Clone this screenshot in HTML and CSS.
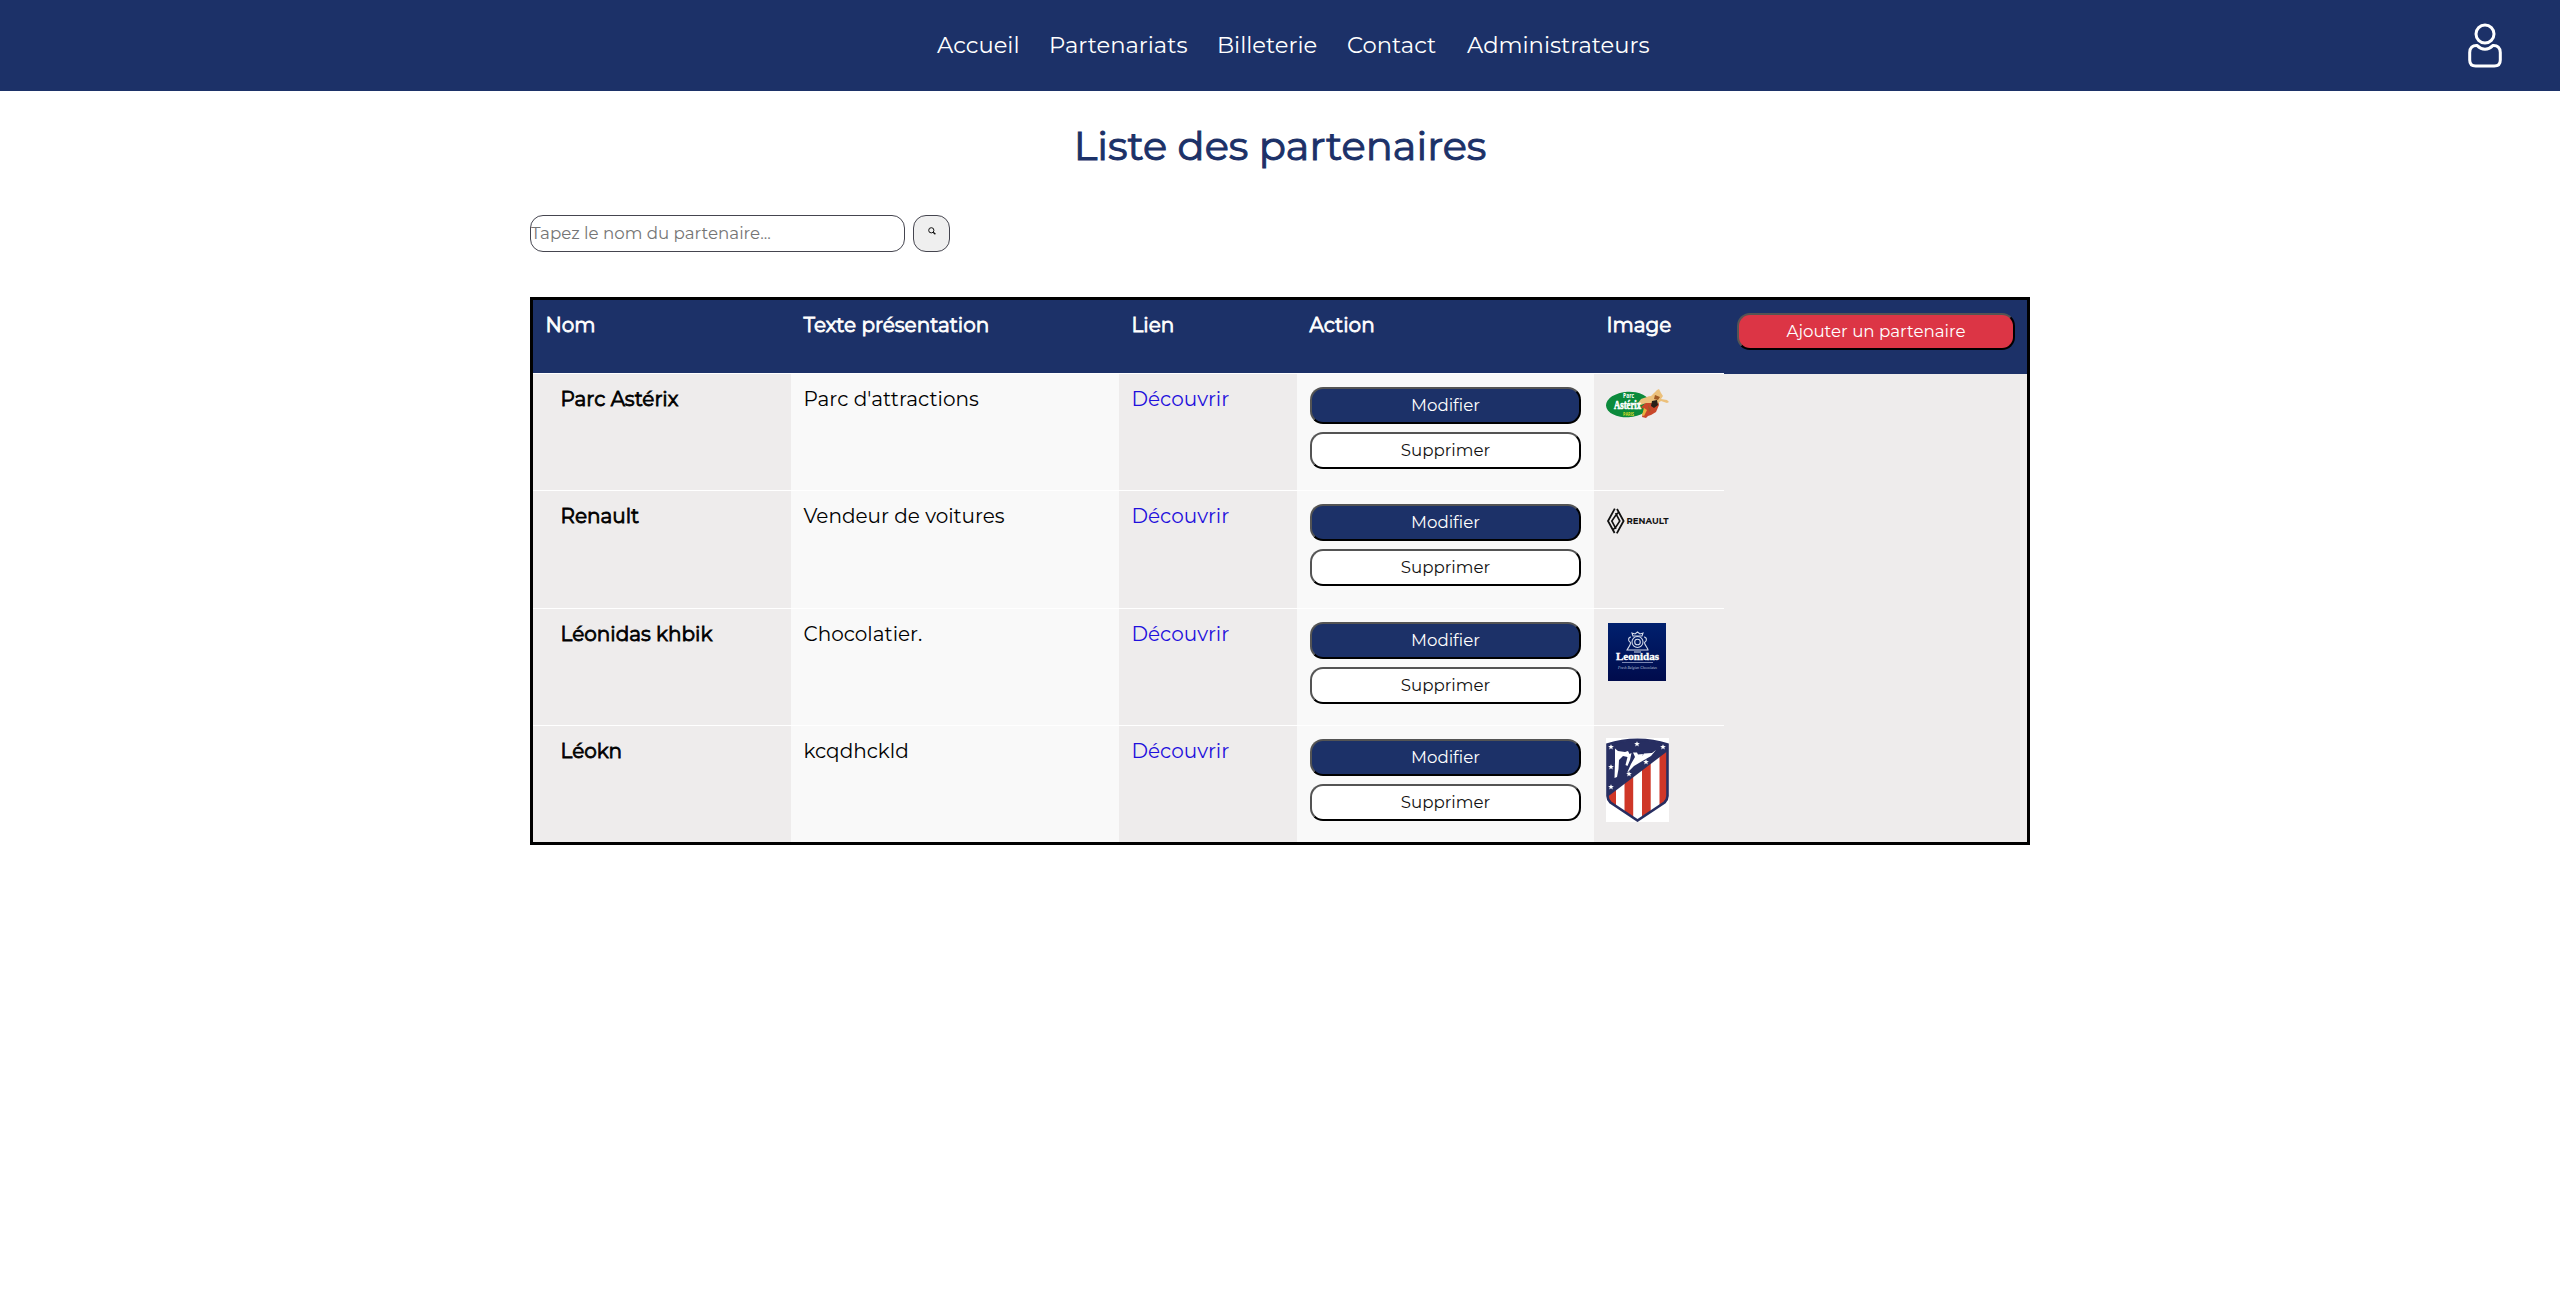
FILE: index.html
```html
<!DOCTYPE html>
<html lang="fr">
<head>
<meta charset="utf-8">
<title>Liste des partenaires</title>
<link rel="stylesheet" href="styles.css">
</head>
<body>
<header class="topbar">
  <nav class="menu">
    <a href="#">Accueil</a>
    <a href="#">Partenariats</a>
    <a href="#">Billeterie</a>
    <a href="#">Contact</a>
    <a href="#">Administrateurs</a>
  </nav>
  <svg class="user" viewBox="0 0 34 45" fill="none" stroke="#fff" stroke-width="3">
    <circle cx="17" cy="11" r="9"/>
    <path d="M9.2 22.600C4.500 22.200 1.700 25 1.700 29.500V37c0 4 2.300 6 6 6h18.600c3.700 0 6-2 6-6v-7.500c0-4.500-2.800-7.300-7.500-6.900-2.200 2.300-4.600 3.600-7.800 3.600s-5.600-1.300-7.800-3.600Z"/>
  </svg>
</header>

<main>
  <h1>Liste des partenaires</h1>

  <form class="search">
    <input type="text" placeholder="Tapez le nom du partenaire...">
    <button type="button" aria-label="Rechercher">
      <svg viewBox="0 0 8 8" fill="none" stroke="#111"><circle cx="3.300" cy="3.300" r="2.600" stroke-width="1"/><path d="M5.200 5.200 7.400 7.200" stroke-width="1.400"/></svg>
    </button>
  </form>

  <section class="partners">
    <div class="list">
      <div class="row head">
        <div class="cell">Nom</div>
        <div class="cell">Texte présentation</div>
        <div class="cell">Lien</div>
        <div class="cell">Action</div>
        <div class="cell">Image</div>
      </div>

      <div class="row">
        <div class="cell name">Parc Astérix</div>
        <div class="cell light">Parc d'attractions</div>
        <div class="cell"><a href="#">Découvrir</a></div>
        <div class="cell light actions"><button class="edit">Modifier</button><button class="del">Supprimer</button></div>
        <div class="cell logo">
          <svg class="logo-asterix" viewBox="0 0 64 29">
            <ellipse cx="22" cy="15.500" rx="22" ry="12.800" fill="#0b8a3c" transform="rotate(-3 22 15.500)"/>
            <path d="M36 28l2-8-3-2 9-8 4-2 4 2 1 6-3 7-5 3-3 1-2 2Z" fill="#c8472a"/>
            <path d="M35 10c4-1 7-3 10-3l3-3 3-3 2-1 2 4 2 3-2 3 6 1 2 2-2 1-6-2-4 3-6-1-5 0-5 2-3-2Z" fill="#ecc07b"/>
            <path d="M46 12l5-1 1 5-4 3-3-2Z" fill="#272018"/>
            <path d="M38 19l3 2-3 6-2-1Z" fill="#e8b23c"/>
            <path d="M49 6l5 2-2 3-4-1ZM42 16l3 5-2 2Z" fill="#a05a25"/>
            <text x="17" y="9" class="ax-top" textLength="11" lengthAdjust="spacingAndGlyphs">Parc</text>
            <text x="8" y="20" class="ax-main" textLength="27" lengthAdjust="spacingAndGlyphs">Astérix</text>
            <text x="17" y="26.500" class="ax-sub" textLength="11" lengthAdjust="spacingAndGlyphs">PARIS</text>
          </svg>
        </div>
      </div>

      <div class="row">
        <div class="cell name">Renault</div>
        <div class="cell light">Vendeur de voitures</div>
        <div class="cell"><a href="#">Découvrir</a></div>
        <div class="cell light actions"><button class="edit">Modifier</button><button class="del">Supprimer</button></div>
        <div class="cell logo">
          <svg class="logo-renault" viewBox="0 0 64 26">
            <g fill="none" stroke="#111" stroke-width="1.800">
              <path d="M8.800 .6 2 13l6.600 12M10.800 25.400 17.600 13 11 1"/>
              <path d="M12.700 4.200 9.600 7.500 5.800 13l4.200 7.800M6.800 21.800 9.900 19l3.900-6L9.600 5.200" stroke-width="1.600"/>
            </g>
            <text x="20.500" y="15.800" textLength="42" lengthAdjust="spacingAndGlyphs">RENAULT</text>
          </svg>
        </div>
      </div>

      <div class="row">
        <div class="cell name">Léonidas khbik</div>
        <div class="cell light">Chocolatier.</div>
        <div class="cell"><a href="#">Découvrir</a></div>
        <div class="cell light actions"><button class="edit">Modifier</button><button class="del">Supprimer</button></div>
        <div class="cell logo">
          <svg class="logo-leonidas" viewBox="0 0 58 58">
            <defs><linearGradient id="navy" x2="0" y2="1"><stop offset="0" stop-color="#00206e"/><stop offset="1" stop-color="#000b4c"/></linearGradient></defs>
            <rect width="58" height="58" fill="url(#navy)"/>
            <g fill="none" stroke="#d5dbea" stroke-width="1.100">
              <circle cx="29.500" cy="19" r="5.500"/>
              <circle cx="29.500" cy="19" r="2.800"/>
              <path d="M25 13l-1-3 3 1 2.500-2 2.500 2 3-1-1 3ZM23 14c-3 0-3 4-1 5s-2 6-3 8h6M36 14c3 0 3 4 1 5s3 6 3 8h-6M24 27h11M26 29h7"/>
            </g>
            <text x="8" y="37" class="leo-main" textLength="43" lengthAdjust="spacingAndGlyphs">Leonidas</text>
            <path d="M14 39.500h31" stroke="#9aa6cc" stroke-width=".8"/>
            <text x="10" y="45.500" class="leo-sub" textLength="39" lengthAdjust="spacingAndGlyphs">Fresh Belgian Chocolates</text>
          </svg>
        </div>
      </div>

      <div class="row">
        <div class="cell name">Léokn</div>
        <div class="cell light">kcqdhckld</div>
        <div class="cell"><a href="#">Découvrir</a></div>
        <div class="cell light actions"><button class="edit">Modifier</button><button class="del">Supprimer</button></div>
        <div class="cell logo">
          <svg class="logo-atletico" viewBox="0 0 63 84">
            <defs>
              <clipPath id="shield"><path d="M2 7C20 .8 43 .8 61 7V58q0 4-3 7L31.500 81.500 5 65q-3-3-3-7Z"/></clipPath>
            </defs>
            <rect width="63" height="84" fill="#fff"/>
            <g clip-path="url(#shield)">
              <path d="M1 30h9v54H1ZM18.500 30h8.700v54h-8.700ZM36 20h8.700v64H36ZM53.500 8H62v76h-8.500Z" fill="#cf3728"/>
              <path d="M0 0h63v12L0 60Z" fill="#272e61"/>
            </g>
            <path d="M1.500 6.500C20 .2 43 .2 61.500 6.500V58q0 3.500-3 6.500L31.500 82.500 4.500 64.500q-3-3-3-6.500Z" fill="none" stroke="#272e61" stroke-width="2.600"/>
            <path d="M9 10.500l3 2.500 7 1 3-1 1.500 3 2-1-1.500 7-2.500 6-2-1 2-8-4.500-1-4 4-.5 9-1.500 8-2.500 1 .5-16ZM27 14.500l4 0 1 2 5-.5-4 9-5 3-7 7 4-9 4-7ZM38 15.500l8-.5 4-3-5 6-12 7 1-4Z" fill="#fff"/>
            <g fill="#fff">
              <path id="st" d="M31 3.200l.8 1.900 2 .1-1.600 1.300.6 2-1.800-1.200-1.800 1.200.6-2-1.600-1.300 2-.1Z"/>
              <use href="#st" x="-26" y="3"/>
              <use href="#st" x="26" y="3"/>
              <use href="#st" x="-26" y="23"/>
              <use href="#st" x="-26" y="43"/>
              <use href="#st" x="9" y="18"/>
              <use href="#st" x="-8" y="30"/>
            </g>
          </svg>
        </div>
      </div>
    </div>
    <aside class="side">
      <div class="side-head"><button class="add">Ajouter un partenaire</button></div>
    </aside>
  </section>
</main>
</body>
</html>
```
FILE: styles.css
```css
* { box-sizing: border-box; }

body {
  margin: 0;
  background: #fff;
  color: #000;
  font-family: Montserrat, Inter, sans-serif;
}

a { text-decoration: none; }

.topbar {
  display: flex;
  align-items: center;
  justify-content: space-between;
  height: 91px;
  padding: 0 58px 0 937px;
  background: #1c3168;
}

.menu {
  display: grid;
  grid-template-columns: 112px 168px 130px 120px auto;
  padding-bottom: 2px;
  font-size: 22.670px;
  font-weight: 400;
  line-height: 28px;
  white-space: nowrap;
}
.menu a { color: #fff; }

.user { width: 34px; height: 45px; }

h1 {
  margin: 31px 0 45px;
  color: #1c3168;
  font-size: 40px;
  font-weight: 400;
  line-height: 48px;
  text-align: center;
  -webkit-text-stroke: 1px #1c3168;
}

main { width: 1500px; margin: 0 auto; }

.search { display: flex; gap: 8px; margin-bottom: 45px; }
.search input {
  width: 375px;
  height: 37px;
  padding: 0 0 1px;
  border: 1px solid #45454f;
  border-radius: 13px;
  font: 400 16.670px Montserrat, Inter, sans-serif;
}
.search input::placeholder { color: #757575; }
.search button {
  display: flex;
  align-items: flex-start;
  justify-content: flex-start;
  width: 37px;
  height: 37px;
  padding: 11px 0 0 13.500px;
  border: 1px solid #45454f;
  border-radius: 13px;
  background: #efefef;
}
.search svg { display: block; width: 8px; height: 8px; }

.partners {
  display: grid;
  grid-template-columns: 1191px 303px;
  border: 3px solid #000;
  font-size: 20px;
  line-height: 24px;
}

.row {
  display: grid;
  grid-template-columns: 258px 328px 178px 297px 130px;
  height: 117.250px;
  border-top: 1px solid #fff;
  background: #eeecec;
}
.row.head {
  height: 73px;
  border: 0;
  background: #1c3168;
  color: #fff;
  -webkit-text-stroke: .8px #fff;
}
.cell { padding: 13px 12.500px; }
.cell.light { background: #f9f9f9; }
.cell.name { padding-left: 27.500px; -webkit-text-stroke: .8px #000; }
.cell.logo { padding: 12px 0 0 12px; }
.cell a { color: #1f10dc; }

.cell.actions { display: flex; flex-direction: column; gap: 8px; padding: 13px; }

.edit, .del, .add {
  flex: none;
  width: 100%;
  height: 37px;
  padding: 0 0 1px;
  border: 2px outset #000;
  border-radius: 13px;
  font: 400 16.670px Montserrat, Inter, sans-serif;
}
.edit { background: #1c3168; color: #fff; }
.del { background: #fff; color: #111; }
.add { background: #dc3545; color: #fff; }

.side { background: #eeecec; }
.side-head { height: 74px; padding: 13px 12px 0 13px; background: #1c3168; }

.cell svg { display: block; }
.logo-asterix { width: 64px; height: 29px; margin-top: 3px; }
.ax-top { font: 700 7.500px "Open Sans", sans-serif; fill: #fff; }
.ax-main { font: 700 11.500px "Liberation Serif", serif; fill: #fff; stroke: #fff; stroke-width: .6; }
.ax-sub { font: 700 5px "Open Sans", sans-serif; fill: #d9dc25; }
.logo-renault { width: 64px; height: 26px; margin-top: 4.500px; }
.logo-renault text { font: 700 8px Montserrat, sans-serif; fill: #111; }
.logo-leonidas { width: 58px; height: 58px; margin: 2px 0 0 2px; }
.leo-main { font: 700 10px "Liberation Serif", serif; fill: #fff; stroke: #fff; stroke-width: .3; }
.leo-sub { font: italic 4.500px "Liberation Serif", serif; fill: #b9c2dd; }
.logo-atletico { width: 63px; height: 84px; }
```
